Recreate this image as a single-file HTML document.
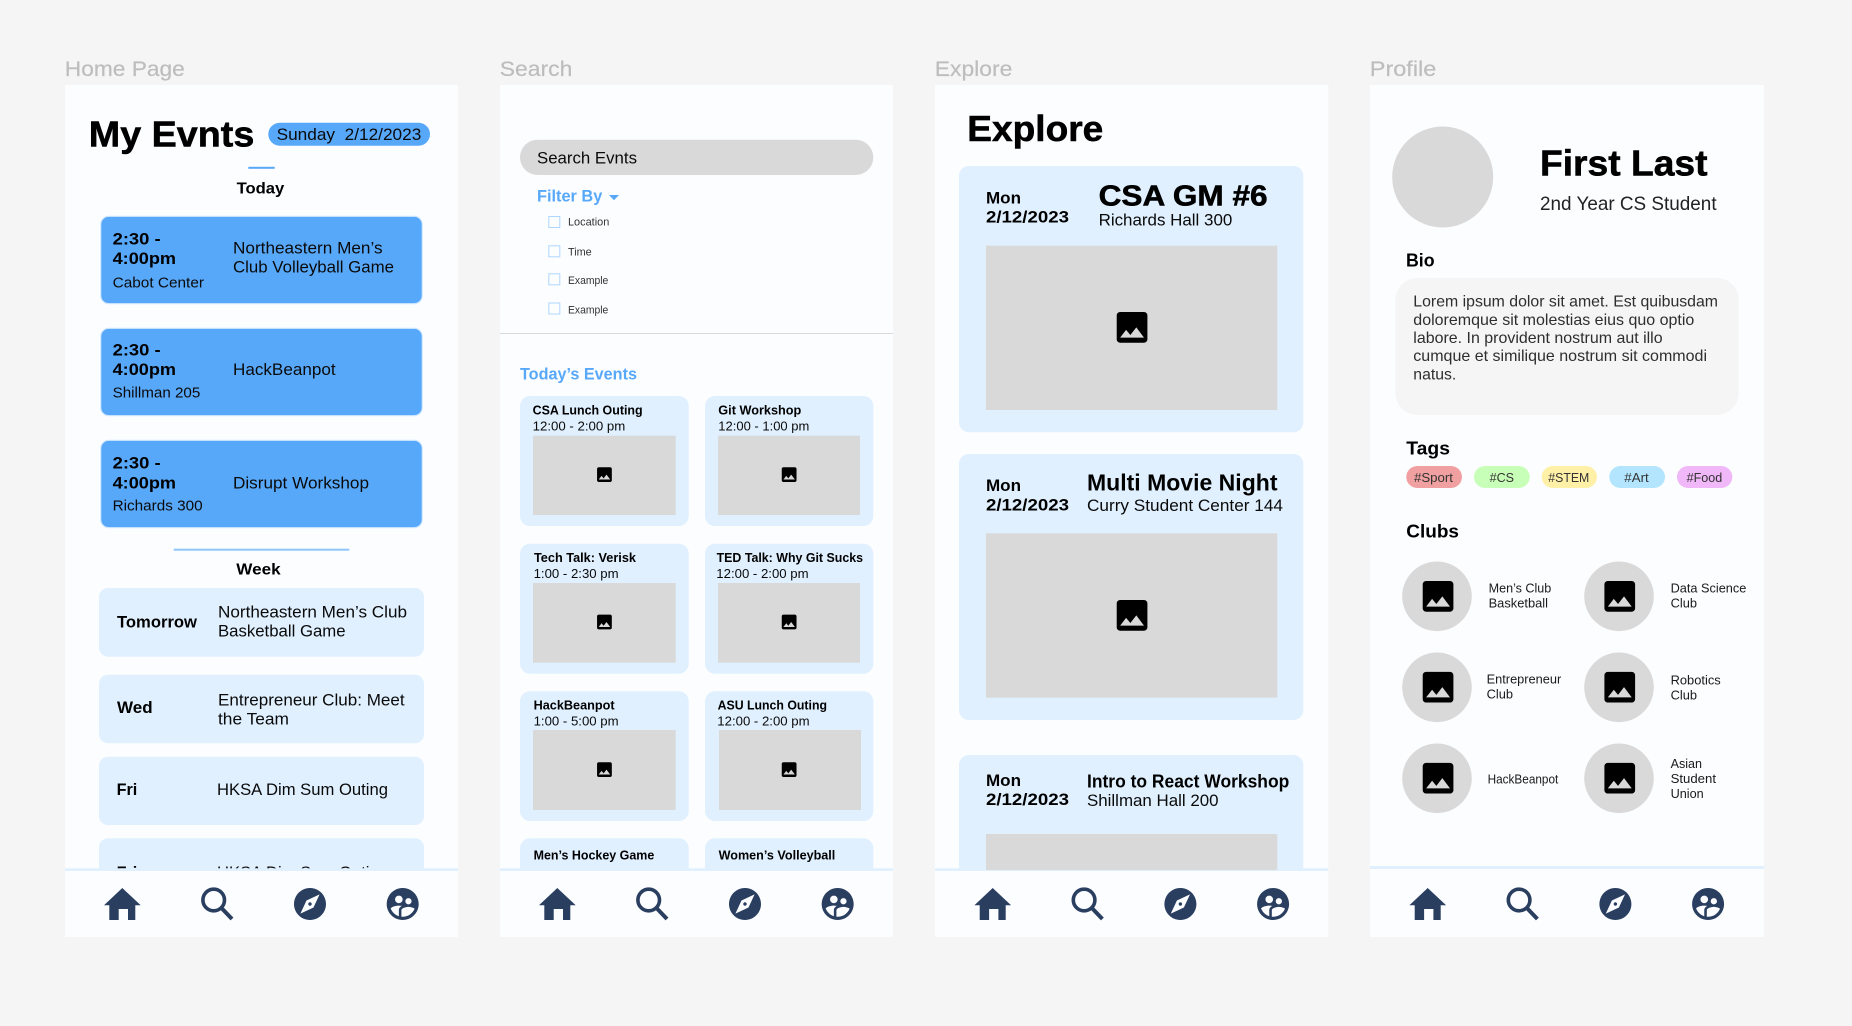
<!DOCTYPE html>
<html lang="en"><head><meta charset="utf-8"><title>Evnts wireframes</title>
<style>
html,body{margin:0;padding:0;background:#f5f5f5;width:1852px;height:1026px;overflow:hidden}
svg{display:block}
text{font-family:"Liberation Sans",Arial,sans-serif;fill:#0a0a0a;font-size:17px;white-space:pre;transform:translateX(-.7px)}
.b{font-weight:700;fill:#000}
.h{stroke:#000;stroke-width:.55px}
.lb{fill:#bdbdbd;font-size:21.5px;stroke:#bdbdbd;stroke-width:.2px}
.bl{fill:#58a8fa;font-weight:700}
.s{font-size:13px}
.f{font-size:15px}
.g{font-size:16px;fill:#2e2e2e}
.x{font-size:11px;fill:#333}
.tg{font-size:13px;fill:#333}
.c{font-size:13px;fill:#1a1a1a}
</style></head><body>
<svg xmlns="http://www.w3.org/2000/svg" width="1852" height="1026" viewBox="0 0 1852 1026">
<defs>
<path id="im" d="M21 19V5c0-1.1-.9-2-2-2H5c-1.100 0-2 .9-2 2v14c0 1.100.9 2 2 2h14c1.100 0 2-.9 2-2zM8.500 13.500l2.500 3.010L14.500 12l4.500 6H5l3.500-4.500z"/>
<g id="nav">
<path fill="#2a3f60" d="M122.300 888 L140.700 905.300 H135.300 V920 H128 V909 H118.700 V920 H109.300 V905.300 H104 Z"/>
<circle cx="213.700" cy="900" r="10.800" fill="none" stroke="#2a3f60" stroke-width="3.600"/>
<path d="M221.700 908.300 L232 919" stroke="#2a3f60" stroke-width="4" fill="none"/>
<path fill="#2a3f60" transform="translate(290.800,884.800) scale(1.6)" d="M12 10.900c-.61 0-1.100.49-1.100 1.100s.49 1.100 1.100 1.100c.61 0 1.100-.49 1.100-1.100s-.49-1.100-1.100-1.100zM12 2C6.480 2 2 6.480 2 12s4.480 10 10 10 10-4.480 10-10S17.520 2 12 2zm2.190 12.190L6 18l3.810-8.190L18 6l-3.810 8.190z"/>
<path fill="#2a3f60" transform="translate(383.500,884.800) scale(1.6)" d="M11.990 2c-5.520 0-10 4.480-10 10s4.480 10 10 10 10-4.480 10-10-4.480-10-10-10zm3.610 6.340c1.070 0 1.930.86 1.930 1.930 0 1.070-.86 1.930-1.930 1.930-1.070 0-1.930-.86-1.930-1.930-.01-1.070.86-1.930 1.930-1.930zm-6-1.580c1.300 0 2.360 1.060 2.360 2.360 0 1.300-1.060 2.360-2.360 2.360s-2.360-1.060-2.360-2.360c0-1.310 1.050-2.360 2.360-2.360zm0 9.130v3.750c-2.400-.75-4.300-2.600-5.140-4.960 1.050-1.120 3.670-1.690 5.140-1.690.53 0 1.200.08 1.900.22-1.640.87-1.900 2.020-1.900 2.680zM11.990 20c-.27 0-.53-.01-.79-.04v-4.070c0-1.420 2.940-2.130 4.400-2.130 1.070 0 2.920.39 3.840 1.150-1.170 2.970-4.060 5.090-7.450 5.090z"/>
</g>
</defs>
<rect width="1852" height="1026" fill="#f5f5f5"/>

<!-- labels -->
<text class="lb" x="65.500" y="76" textLength="120" lengthAdjust="spacingAndGlyphs">Home Page</text>
<text class="lb" x="500.500" y="76" textLength="72.500" lengthAdjust="spacingAndGlyphs">Search</text>
<text class="lb" x="935.500" y="76" textLength="77.500" lengthAdjust="spacingAndGlyphs">Explore</text>
<text class="lb" x="1370.500" y="76" textLength="66.500" lengthAdjust="spacingAndGlyphs">Profile</text>

<!-- ========== HOME ========== -->
<rect x="65" y="85" width="393" height="852" fill="#fcfdff"/>
<text class="b h" style="font-size:36px" x="89.500" y="146.700" textLength="165.500" lengthAdjust="spacingAndGlyphs">My Evnts</text>
<rect x="268.300" y="122.700" width="161.700" height="23" rx="11.500" fill="#58a8fa"/>
<text x="277.300" y="140" textLength="144.700" lengthAdjust="spacingAndGlyphs">Sunday  2/12/2023</text>
<rect x="248.300" y="166.800" width="26.400" height="2" fill="#58a8fa"/>
<text class="b" style="font-size:16px" x="237.300" y="193.300" textLength="47.700" lengthAdjust="spacingAndGlyphs">Today</text>

<g fill="#58a8fa" stroke="#d3e9ff" stroke-width="1.200">
<rect x="100.700" y="216.300" width="321.600" height="87.400" rx="8"/>
<rect x="100.700" y="328.300" width="321.600" height="87.400" rx="8"/>
<rect x="100.700" y="440.300" width="321.600" height="87.400" rx="8"/>
</g>
<text class="b" x="113.300" y="244.700" textLength="48" lengthAdjust="spacingAndGlyphs">2:30 -</text>
<text class="b" x="113.300" y="264" textLength="63.400" lengthAdjust="spacingAndGlyphs">4:00pm</text>
<text class="f" x="113.300" y="287.300" textLength="91.400" lengthAdjust="spacingAndGlyphs">Cabot Center</text>
<text x="233.700" y="253.300" textLength="149.600" lengthAdjust="spacingAndGlyphs">Northeastern Men’s</text>
<text x="233.700" y="272.300" textLength="161" lengthAdjust="spacingAndGlyphs">Club Volleyball Game</text>

<text class="b" x="113.300" y="355.700" textLength="48" lengthAdjust="spacingAndGlyphs">2:30 -</text>
<text class="b" x="113.300" y="375" textLength="63.400" lengthAdjust="spacingAndGlyphs">4:00pm</text>
<text class="f" x="113.300" y="397.700" textLength="87.700" lengthAdjust="spacingAndGlyphs">Shillman 205</text>
<text x="233.700" y="375" textLength="102.600" lengthAdjust="spacingAndGlyphs">HackBeanpot</text>

<text class="b" x="113.300" y="468.700" textLength="48" lengthAdjust="spacingAndGlyphs">2:30 -</text>
<text class="b" x="113.300" y="488.300" textLength="63.400" lengthAdjust="spacingAndGlyphs">4:00pm</text>
<text class="f" x="113.300" y="510.700" textLength="90" lengthAdjust="spacingAndGlyphs">Richards 300</text>
<text x="233.700" y="488.300" textLength="136" lengthAdjust="spacingAndGlyphs">Disrupt Workshop</text>

<rect x="173.700" y="548.700" width="175.600" height="2" fill="#8fc6fc"/>
<text class="b" style="font-size:16px" x="237" y="574.700" textLength="44.300" lengthAdjust="spacingAndGlyphs">Week</text>

<g fill="#e0f0ff">
<rect x="99" y="588" width="325" height="68.700" rx="9"/>
<rect x="99" y="674.700" width="325" height="68.600" rx="9"/>
<rect x="99" y="756.700" width="325" height="68.300" rx="9"/>
<rect x="99" y="838.300" width="325" height="68.300" rx="9"/>
</g>
<text class="b" x="117.700" y="627.300" textLength="80" lengthAdjust="spacingAndGlyphs">Tomorrow</text>
<text x="218.700" y="617.700" textLength="189" lengthAdjust="spacingAndGlyphs">Northeastern Men’s Club</text>
<text x="218.700" y="636.700" textLength="127.600" lengthAdjust="spacingAndGlyphs">Basketball Game</text>
<text class="b" x="117.700" y="713" textLength="35.600" lengthAdjust="spacingAndGlyphs">Wed</text>
<text x="218.700" y="705.300" textLength="186.600" lengthAdjust="spacingAndGlyphs">Entrepreneur Club: Meet</text>
<text x="218.700" y="724.700" textLength="71" lengthAdjust="spacingAndGlyphs">the Team</text>
<text class="b" x="117.300" y="795" textLength="20.700" lengthAdjust="spacingAndGlyphs">Fri</text>
<text x="217.700" y="795" textLength="171" lengthAdjust="spacingAndGlyphs">HKSA Dim Sum Outing</text>
<text class="b" x="117.300" y="878" textLength="20.700" lengthAdjust="spacingAndGlyphs">Fri</text>
<text x="217.700" y="878" textLength="171" lengthAdjust="spacingAndGlyphs">HKSA Dim Sum Outing</text>
<rect x="65" y="868.300" width="393" height="3" fill="#e0f0ff"/>
<rect x="65" y="871" width="393" height="66" fill="#fcfdff"/>
<use href="#nav"/>

<!-- ========== SEARCH ========== -->
<rect x="500" y="85" width="393" height="852" fill="#fcfdff"/>
<rect x="520" y="139.700" width="353.300" height="35.300" rx="17.650" fill="#d9d9d9"/>
<text x="537.700" y="163.300" textLength="100" lengthAdjust="spacingAndGlyphs">Search Evnts</text>
<text class="bl" x="537.700" y="201.700" textLength="65.300" lengthAdjust="spacingAndGlyphs">Filter By</text>
<path d="M609 195 H619 L614 200.300 Z" fill="#58a8fa"/>
<g fill="#fcfdff" stroke="#aed7ff" stroke-width="1">
<rect x="548.800" y="216.500" width="11" height="11"/>
<rect x="548.800" y="245.800" width="11" height="11"/>
<rect x="548.800" y="273.800" width="11" height="11"/>
<rect x="548.800" y="303" width="11" height="11"/>
</g>
<text class="x" x="568.700" y="225.700" textLength="41.300" lengthAdjust="spacingAndGlyphs">Location</text>
<text class="x" x="568.700" y="255.700" textLength="23.700" lengthAdjust="spacingAndGlyphs">Time</text>
<text class="x" x="568.700" y="284" textLength="40.300" lengthAdjust="spacingAndGlyphs">Example</text>
<text class="x" x="568.700" y="313.300" textLength="40.300" lengthAdjust="spacingAndGlyphs">Example</text>
<rect x="500" y="333" width="393" height="1" fill="#d9d9d9"/>
<text class="bl" style="font-size:16.500px" x="520.700" y="379.300" textLength="117" lengthAdjust="spacingAndGlyphs">Today’s Events</text>

<g fill="#e0f0ff">
<rect x="520" y="396" width="168.700" height="130" rx="10"/>
<rect x="705" y="396" width="168.300" height="130" rx="10"/>
<rect x="520" y="543.700" width="168.700" height="130" rx="10"/>
<rect x="705" y="543.700" width="168.300" height="130" rx="10"/>
<rect x="520" y="691.300" width="168.700" height="129.700" rx="10"/>
<rect x="705" y="691.300" width="168.300" height="129.700" rx="10"/>
<rect x="520" y="838.300" width="168.700" height="60" rx="10"/>
<rect x="705" y="838.300" width="168.300" height="60" rx="10"/>
</g>
<g fill="#d9d9d9">
<rect x="533" y="435.700" width="142.700" height="79.300"/>
<rect x="718" y="435.700" width="142" height="79.300"/>
<rect x="533" y="583" width="142.700" height="79.700"/>
<rect x="718" y="583" width="142" height="79.700"/>
<rect x="533" y="730" width="142.700" height="80"/>
<rect x="719" y="730" width="142" height="80"/>
</g>
<g fill="#000">
<use href="#im" transform="translate(594.600,464.800) scale(.82)"/>
<use href="#im" transform="translate(779.300,464.800) scale(.82)"/>
<use href="#im" transform="translate(594.600,612.200) scale(.82)"/>
<use href="#im" transform="translate(779.300,612.200) scale(.82)"/>
<use href="#im" transform="translate(594.600,759.800) scale(.82)"/>
<use href="#im" transform="translate(779.300,759.800) scale(.82)"/>
</g>
<text class="b s" x="533.300" y="414.700" textLength="110" lengthAdjust="spacingAndGlyphs">CSA Lunch Outing</text>
<text class="s" x="533.300" y="430.700" textLength="92.700" lengthAdjust="spacingAndGlyphs">12:00 - 2:00 pm</text>
<text class="b s" x="719" y="414.700" textLength="83" lengthAdjust="spacingAndGlyphs">Git Workshop</text>
<text class="s" x="719" y="430.700" textLength="91" lengthAdjust="spacingAndGlyphs">12:00 - 1:00 pm</text>
<text class="b s" x="534.700" y="562" textLength="102" lengthAdjust="spacingAndGlyphs">Tech Talk: Verisk</text>
<text class="s" x="534.300" y="578" textLength="85" lengthAdjust="spacingAndGlyphs">1:00 - 2:30 pm</text>
<text class="b s" x="717.300" y="562" textLength="146.400" lengthAdjust="spacingAndGlyphs">TED Talk: Why Git Sucks</text>
<text class="s" x="717" y="578" textLength="92.300" lengthAdjust="spacingAndGlyphs">12:00 - 2:00 pm</text>
<text class="b s" x="534.300" y="709.300" textLength="81" lengthAdjust="spacingAndGlyphs">HackBeanpot</text>
<text class="s" x="534.300" y="725.300" textLength="85" lengthAdjust="spacingAndGlyphs">1:00 - 5:00 pm</text>
<text class="b s" x="718.300" y="709.300" textLength="109.400" lengthAdjust="spacingAndGlyphs">ASU Lunch Outing</text>
<text class="s" x="718" y="725.300" textLength="92.300" lengthAdjust="spacingAndGlyphs">12:00 - 2:00 pm</text>
<text class="b s" x="534.300" y="859.700" textLength="120.700" lengthAdjust="spacingAndGlyphs">Men’s Hockey Game</text>
<text class="b s" x="719.300" y="859.700" textLength="116.700" lengthAdjust="spacingAndGlyphs">Women’s Volleyball</text>
<rect x="500" y="868.300" width="393" height="3" fill="#e0f0ff"/>
<rect x="500" y="871" width="393" height="66" fill="#fcfdff"/>
<use href="#nav" transform="translate(435,0)"/>

<!-- ========== EXPLORE ========== -->
<rect x="935" y="85" width="393.300" height="852" fill="#fcfdff"/>
<text class="b h" style="font-size:36px" x="968" y="141" textLength="136" lengthAdjust="spacingAndGlyphs">Explore</text>
<g fill="#e0f0ff">
<rect x="959" y="166" width="344.300" height="266.300" rx="10"/>
<rect x="959" y="454" width="344.300" height="266" rx="10"/>
<rect x="959" y="755" width="344.300" height="140" rx="10"/>
</g>
<rect x="935" y="868.300" width="393.300" height="3" fill="#e0f0ff"/>
<g fill="#d9d9d9">
<rect x="986" y="245.700" width="291.300" height="164.300"/>
<rect x="986" y="533.300" width="291.300" height="164.400"/>
<rect x="986" y="834" width="291.300" height="36"/>
</g>
<use href="#im" fill="#000" transform="translate(1111.600,306.900) scale(1.705)"/>
<use href="#im" fill="#000" transform="translate(1111.600,594.900) scale(1.705)"/>
<text class="b" x="986.700" y="203.300" textLength="35" lengthAdjust="spacingAndGlyphs">Mon</text>
<text class="b" x="986.700" y="222.700" textLength="83" lengthAdjust="spacingAndGlyphs">2/12/2023</text>
<text class="b h" style="font-size:29px" x="1099.300" y="205.700" textLength="169" lengthAdjust="spacingAndGlyphs">CSA GM #6</text>
<text x="1099.300" y="225.700" textLength="133.700" lengthAdjust="spacingAndGlyphs">Richards Hall 300</text>
<text class="b" x="986.700" y="491" textLength="35" lengthAdjust="spacingAndGlyphs">Mon</text>
<text class="b" x="986.700" y="510.300" textLength="83" lengthAdjust="spacingAndGlyphs">2/12/2023</text>
<text class="b" style="font-size:23px" x="1087.700" y="490.700" textLength="190.500" lengthAdjust="spacingAndGlyphs">Multi Movie Night</text>
<text x="1087.700" y="511" textLength="196" lengthAdjust="spacingAndGlyphs">Curry Student Center 144</text>
<text class="b" x="986.700" y="786" textLength="35" lengthAdjust="spacingAndGlyphs">Mon</text>
<text class="b" x="986.700" y="805" textLength="83" lengthAdjust="spacingAndGlyphs">2/12/2023</text>
<text class="b" style="font-size:18px" x="1087.700" y="787.300" textLength="202.300" lengthAdjust="spacingAndGlyphs">Intro to React Workshop</text>
<text x="1087.700" y="806" textLength="131.600" lengthAdjust="spacingAndGlyphs">Shillman Hall 200</text>
<rect x="935" y="871" width="393.300" height="66" fill="#fcfdff"/>
<use href="#nav" transform="translate(870.400,0)"/>

<!-- ========== PROFILE ========== -->
<rect x="1370" y="85" width="394" height="852" fill="#fcfdff"/>
<circle cx="1442.700" cy="177" r="50.500" fill="#d9d9d9"/>
<text class="b h" style="font-size:36px" x="1540.700" y="175.700" textLength="167.500" lengthAdjust="spacingAndGlyphs">First Last</text>
<text style="font-size:19.500px;fill:#222" x="1540.700" y="210" textLength="176.600" lengthAdjust="spacingAndGlyphs">2nd Year CS Student</text>
<text class="b" style="font-size:18px" x="1406.700" y="266.700" textLength="28.600" lengthAdjust="spacingAndGlyphs">Bio</text>
<rect x="1395.300" y="278" width="343.400" height="137" rx="22" fill="#f5f5f5"/>
<text class="g" x="1414" y="306.700" textLength="304.700" lengthAdjust="spacingAndGlyphs">Lorem ipsum dolor sit amet. Est quibusdam</text>
<text class="g" x="1414" y="325" textLength="281" lengthAdjust="spacingAndGlyphs">doloremque sit molestias eius quo optio</text>
<text class="g" x="1414" y="343" textLength="249.300" lengthAdjust="spacingAndGlyphs">labore. In provident nostrum aut illo</text>
<text class="g" x="1414" y="361" textLength="293.700" lengthAdjust="spacingAndGlyphs">cumque et similique nostrum sit commodi</text>
<text class="g" x="1414" y="379.300" textLength="43" lengthAdjust="spacingAndGlyphs">natus.</text>
<text class="b" style="font-size:18px" x="1407" y="454.300" textLength="43.700" lengthAdjust="spacingAndGlyphs">Tags</text>
<rect x="1406.300" y="466" width="55.700" height="22" rx="11" fill="#f0a0a0"/>
<rect x="1474" y="466" width="55.700" height="22" rx="11" fill="#c8ffb8"/>
<rect x="1541.700" y="466" width="55.300" height="22" rx="11" fill="#fff0a8"/>
<rect x="1609.300" y="466" width="55.700" height="22" rx="11" fill="#b3e5ff"/>
<rect x="1677" y="466" width="55.300" height="22" rx="11" fill="#f0b8f8"/>
<text class="tg" x="1414.700" y="482" textLength="39" lengthAdjust="spacingAndGlyphs">#Sport</text>
<text class="tg" x="1490.300" y="482" textLength="24.400" lengthAdjust="spacingAndGlyphs">#CS</text>
<text class="tg" x="1549" y="482" textLength="41" lengthAdjust="spacingAndGlyphs">#STEM</text>
<text class="tg" x="1625" y="482" textLength="24.400" lengthAdjust="spacingAndGlyphs">#Art</text>
<text class="tg" x="1687.300" y="482" textLength="35.700" lengthAdjust="spacingAndGlyphs">#Food</text>
<text class="b" style="font-size:18px" x="1407" y="537.700" textLength="52.700" lengthAdjust="spacingAndGlyphs">Clubs</text>
<g fill="#d9d9d9">
<circle cx="1437" cy="596.300" r="34.800"/>
<circle cx="1619" cy="596.300" r="34.800"/>
<circle cx="1437" cy="687.300" r="34.800"/>
<circle cx="1619" cy="687.300" r="34.800"/>
<circle cx="1437" cy="778.300" r="34.800"/>
<circle cx="1619" cy="778.300" r="34.800"/>
</g>
<g fill="#000">
<use href="#im" transform="translate(1417.600,575.900) scale(1.705)"/>
<use href="#im" transform="translate(1599.300,575.900) scale(1.705)"/>
<use href="#im" transform="translate(1417.600,666.700) scale(1.705)"/>
<use href="#im" transform="translate(1599.300,666.700) scale(1.705)"/>
<use href="#im" transform="translate(1417.600,757.700) scale(1.705)"/>
<use href="#im" transform="translate(1599.300,757.700) scale(1.705)"/>
</g>
<text class="c" x="1489.300" y="592.300" textLength="62.700" lengthAdjust="spacingAndGlyphs">Men’s Club</text>
<text class="c" x="1489.300" y="607.300" textLength="59.400" lengthAdjust="spacingAndGlyphs">Basketball</text>
<text class="c" x="1671.300" y="592.300" textLength="75.700" lengthAdjust="spacingAndGlyphs">Data Science</text>
<text class="c" x="1671.300" y="607.300" textLength="26.400" lengthAdjust="spacingAndGlyphs">Club</text>
<text class="c" x="1487.300" y="683.300" textLength="74.700" lengthAdjust="spacingAndGlyphs">Entrepreneur</text>
<text class="c" x="1487.300" y="698.300" textLength="26.400" lengthAdjust="spacingAndGlyphs">Club</text>
<text class="c" x="1671.300" y="684.300" textLength="50.100" lengthAdjust="spacingAndGlyphs">Robotics</text>
<text class="c" x="1671.300" y="699.300" textLength="26.400" lengthAdjust="spacingAndGlyphs">Club</text>
<text class="c" x="1488.300" y="783.300" textLength="70.700" lengthAdjust="spacingAndGlyphs">HackBeanpot</text>
<text class="c" x="1671.300" y="768" textLength="31.400" lengthAdjust="spacingAndGlyphs">Asian</text>
<text class="c" x="1671.300" y="783" textLength="45.400" lengthAdjust="spacingAndGlyphs">Student</text>
<text class="c" x="1671.300" y="798" textLength="33.100" lengthAdjust="spacingAndGlyphs">Union</text>
<rect x="1370" y="866" width="394" height="3" fill="#e0f0ff"/>
<use href="#nav" transform="translate(1305.400,0)"/>
</svg>
</body></html>
